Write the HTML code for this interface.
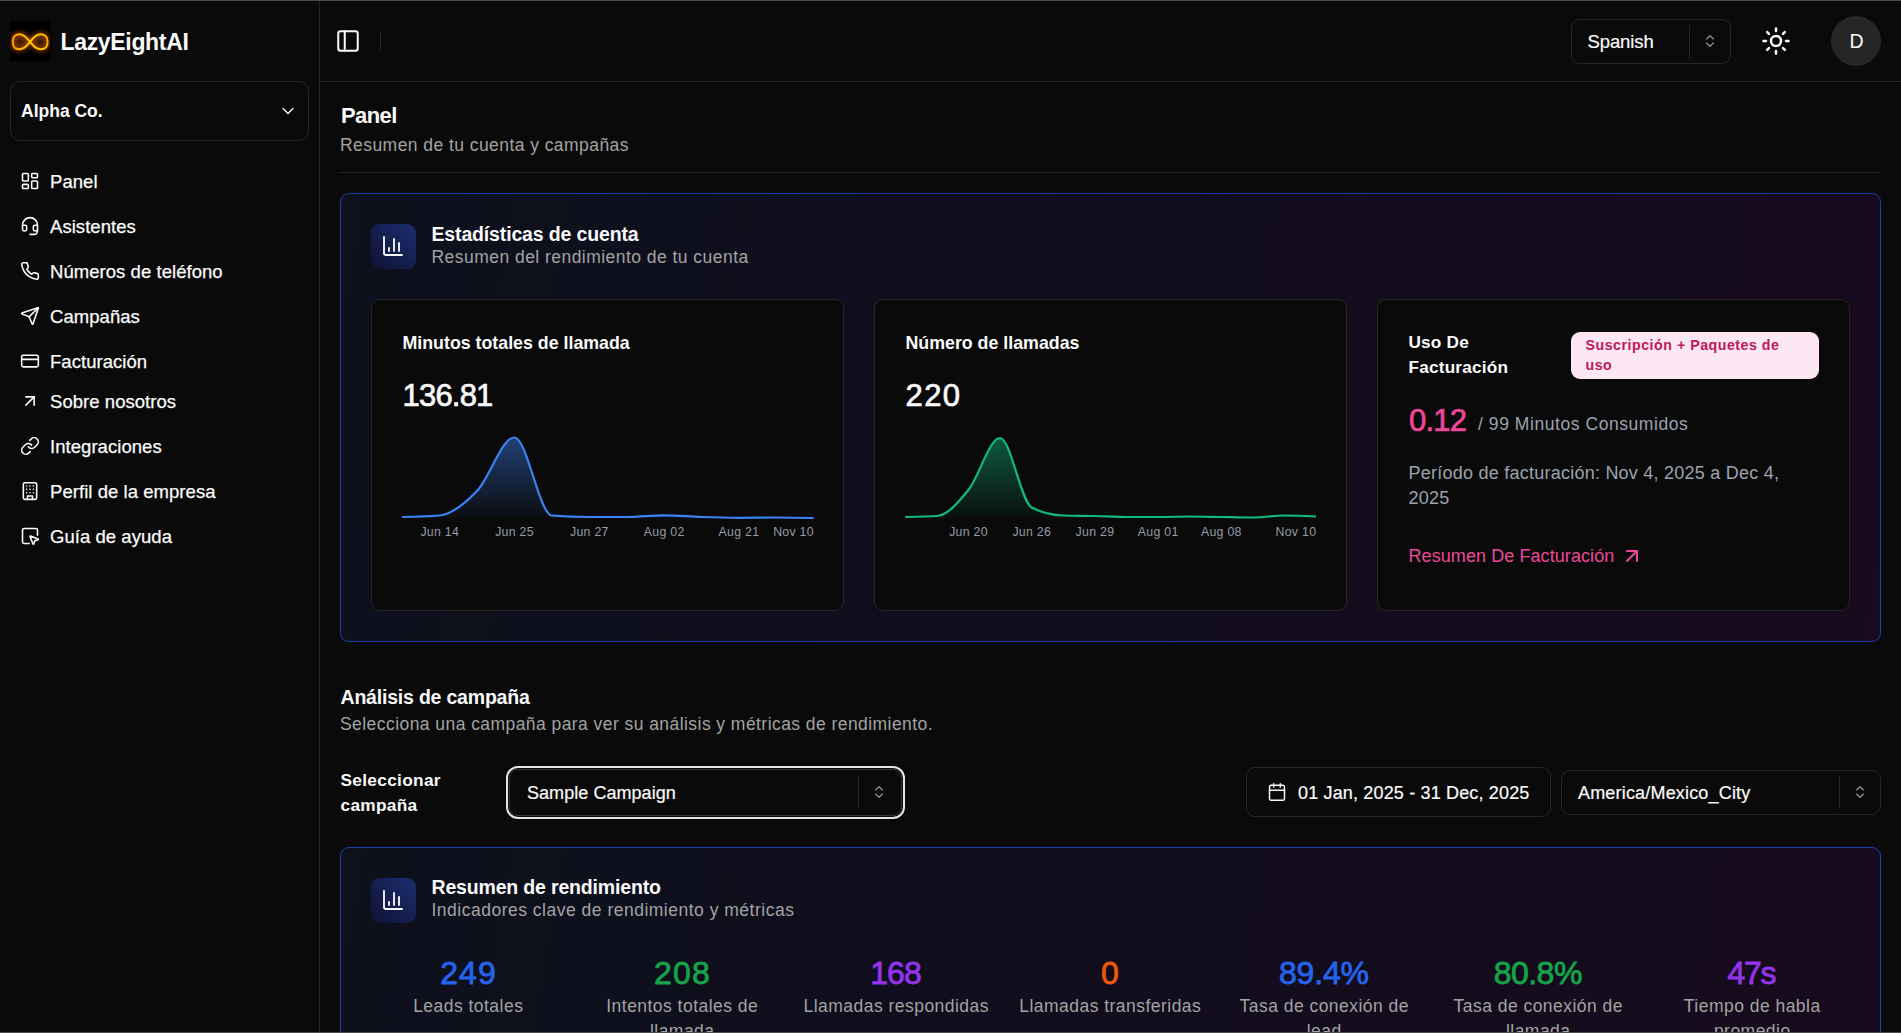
<!DOCTYPE html><html><head><meta charset="utf-8"><style>
html,body{margin:0;padding:0;background:#0a0a0a;width:1901px;height:1033px;overflow:hidden;}
body{position:relative;font-family:"Liberation Sans",sans-serif;}
.t{position:absolute;font-family:"Liberation Sans",sans-serif;}
svg{display:block}
</style></head><body>
<div style="position:absolute;left:319px;top:1px;width:1px;height:1031px;box-sizing:border-box;background:#262626;"></div>
<div style="position:absolute;left:320px;top:81px;width:1581px;height:1px;box-sizing:border-box;background:#262626;"></div>
<svg style="position:absolute;left:10px;top:21px" width="40" height="40" viewBox="0 0 40 40">
<defs><filter id="glow" x="-50%" y="-50%" width="200%" height="200%"><feGaussianBlur stdDeviation="2.6"/></filter>
<filter id="glow2" x="-50%" y="-50%" width="200%" height="200%"><feGaussianBlur stdDeviation="0.6"/></filter>
<linearGradient id="lg" x1="0" y1="0" x2="1" y2="0"><stop offset="0" stop-color="#ff9d00"/><stop offset="0.5" stop-color="#ffcc00"/><stop offset="1" stop-color="#ffb000"/></linearGradient></defs>
<rect width="40" height="40" fill="#000"/>
<path d="M20,20.8 C24,16 26.5,13.3 31,13.3 C35.3,13.3 37.6,16.5 37.6,20.8 C37.6,25.2 35.3,28.3 31,28.3 C26.5,28.3 24,25.6 20,20.8 C16,16 13.5,13.3 9,13.3 C4.7,13.3 2.8,16.5 2.8,20.8 C2.8,25.2 4.7,28.3 9,28.3 C13.5,28.3 16,25.6 20,20.8Z" fill="#3a1a00" stroke="#ff7000" stroke-width="4" opacity="0.6" filter="url(#glow)"/>
<path d="M20,20.8 C24,16 26.5,13.3 31,13.3 C35.3,13.3 37.6,16.5 37.6,20.8 C37.6,25.2 35.3,28.3 31,28.3 C26.5,28.3 24,25.6 20,20.8 C16,16 13.5,13.3 9,13.3 C4.7,13.3 2.8,16.5 2.8,20.8 C2.8,25.2 4.7,28.3 9,28.3 C13.5,28.3 16,25.6 20,20.8Z" fill="none" stroke="url(#lg)" stroke-width="2" filter="url(#glow2)"/>
</svg>
<div class="t" style="left:60.5px;top:30.53px;font-size:23px;line-height:23px;font-weight:700;color:#fafafa;letter-spacing:-0.33px;white-space:nowrap;">LazyEightAI</div>
<div style="position:absolute;left:10px;top:81px;width:299px;height:60px;box-sizing:border-box;border:1px solid #262626;border-radius:10px;"></div>
<div class="t" style="left:21px;top:102.99px;font-size:17.5px;line-height:17.5px;font-weight:700;color:#fafafa;white-space:nowrap;">Alpha Co.</div>
<svg style="position:absolute;left:278px;top:101px;" width="20" height="20" viewBox="0 0 24 24" fill="none" stroke="#fafafa" stroke-width="1.6" stroke-linecap="round" stroke-linejoin="round"><path d="m6 9 6 6 6-6"/></svg>
<svg style="position:absolute;left:20px;top:171px;" width="20" height="20" viewBox="0 0 24 24" fill="none" stroke="#fafafa" stroke-width="1.9" stroke-linecap="round" stroke-linejoin="round"><rect width="7" height="9" x="3" y="3" rx="1"/><rect width="7" height="5" x="14" y="3" rx="1"/><rect width="7" height="9" x="14" y="12" rx="1"/><rect width="7" height="5" x="3" y="16" rx="1"/></svg>
<div class="t" style="left:50px;top:173.04px;font-size:18.5px;line-height:18.5px;font-weight:400;color:#fafafa;letter-spacing:0.05px;white-space:nowrap;-webkit-text-stroke:0.25px #fafafa;">Panel</div>
<svg style="position:absolute;left:20px;top:216px;" width="20" height="20" viewBox="0 0 24 24" fill="none" stroke="#fafafa" stroke-width="1.9" stroke-linecap="round" stroke-linejoin="round"><path d="M3 11h3a2 2 0 0 1 2 2v3a2 2 0 0 1-2 2H5a2 2 0 0 1-2-2v-5Zm0 0a9 9 0 1 1 18 0m0 0v5a2 2 0 0 1-2 2h-1a2 2 0 0 1-2-2v-3a2 2 0 0 1 2-2h3Z"/><path d="M21 16v2a4 4 0 0 1-4 4h-5"/></svg>
<div class="t" style="left:50px;top:218.04px;font-size:18.5px;line-height:18.5px;font-weight:400;color:#fafafa;letter-spacing:0.05px;white-space:nowrap;-webkit-text-stroke:0.25px #fafafa;">Asistentes</div>
<svg style="position:absolute;left:20px;top:261px;" width="20" height="20" viewBox="0 0 24 24" fill="none" stroke="#fafafa" stroke-width="1.9" stroke-linecap="round" stroke-linejoin="round"><path d="M22 16.92v3a2 2 0 0 1-2.18 2 19.79 19.79 0 0 1-8.63-3.07 19.5 19.5 0 0 1-6-6 19.79 19.79 0 0 1-3.07-8.67A2 2 0 0 1 4.11 2h3a2 2 0 0 1 2 1.72 12.84 12.84 0 0 0 .7 2.81 2 2 0 0 1-.45 2.11L8.09 9.910a16 16 0 0 0 6 6l1.27-1.27a2 2 0 0 1 2.11-.45 12.84 12.84 0 0 0 2.81.7A2 2 0 0 1 22 16.92z"/></svg>
<div class="t" style="left:50px;top:263.04px;font-size:18.5px;line-height:18.5px;font-weight:400;color:#fafafa;letter-spacing:0.05px;white-space:nowrap;-webkit-text-stroke:0.25px #fafafa;">Números de teléfono</div>
<svg style="position:absolute;left:20px;top:306px;" width="20" height="20" viewBox="0 0 24 24" fill="none" stroke="#fafafa" stroke-width="1.9" stroke-linecap="round" stroke-linejoin="round"><path d="M14.536 21.686a.5.5 0 0 0 .937-.024l6.5-19a.496.496 0 0 0-.635-.635l-19 6.5a.5.5 0 0 0-.024.937l7.93 3.18a2 2 0 0 1 1.112 1.11z"/><path d="m21.854 2.147-10.94 10.939"/></svg>
<div class="t" style="left:50px;top:308.04px;font-size:18.5px;line-height:18.5px;font-weight:400;color:#fafafa;letter-spacing:0.05px;white-space:nowrap;-webkit-text-stroke:0.25px #fafafa;">Campañas</div>
<svg style="position:absolute;left:20px;top:351px;" width="20" height="20" viewBox="0 0 24 24" fill="none" stroke="#fafafa" stroke-width="1.9" stroke-linecap="round" stroke-linejoin="round"><rect width="20" height="14" x="2" y="5" rx="2"/><line x1="2" x2="22" y1="10" y2="10"/></svg>
<div class="t" style="left:50px;top:353.04px;font-size:18.5px;line-height:18.5px;font-weight:400;color:#fafafa;letter-spacing:0.05px;white-space:nowrap;-webkit-text-stroke:0.25px #fafafa;">Facturación</div>
<svg style="position:absolute;left:20px;top:391px;" width="20" height="20" viewBox="0 0 24 24" fill="none" stroke="#fafafa" stroke-width="1.9" stroke-linecap="round" stroke-linejoin="round"><path d="M7 7h10v10"/><path d="M7 17 17 7"/></svg>
<div class="t" style="left:50px;top:393.04px;font-size:18.5px;line-height:18.5px;font-weight:400;color:#fafafa;letter-spacing:0.05px;white-space:nowrap;-webkit-text-stroke:0.25px #fafafa;">Sobre nosotros</div>
<svg style="position:absolute;left:20px;top:436px;" width="20" height="20" viewBox="0 0 24 24" fill="none" stroke="#fafafa" stroke-width="1.9" stroke-linecap="round" stroke-linejoin="round"><path d="M10 13a5 5 0 0 0 7.54.54l3-3a5 5 0 0 0-7.07-7.07l-1.72 1.71"/><path d="M14 11a5 5 0 0 0-7.54-.54l-3 3a5 5 0 0 0 7.07 7.07l1.71-1.71"/></svg>
<div class="t" style="left:50px;top:438.04px;font-size:18.5px;line-height:18.5px;font-weight:400;color:#fafafa;letter-spacing:0.05px;white-space:nowrap;-webkit-text-stroke:0.25px #fafafa;">Integraciones</div>
<svg style="position:absolute;left:20px;top:481px;" width="20" height="20" viewBox="0 0 24 24" fill="none" stroke="#fafafa" stroke-width="1.9" stroke-linecap="round" stroke-linejoin="round"><rect width="16" height="20" x="4" y="2" rx="2" ry="2"/><path d="M9 22v-4h6v4"/><path d="M8 6h.01"/><path d="M16 6h.01"/><path d="M12 6h.01"/><path d="M12 10h.01"/><path d="M12 14h.01"/><path d="M16 10h.01"/><path d="M16 14h.01"/><path d="M8 10h.01"/><path d="M8 14h.01"/></svg>
<div class="t" style="left:50px;top:483.04px;font-size:18.5px;line-height:18.5px;font-weight:400;color:#fafafa;letter-spacing:0.05px;white-space:nowrap;-webkit-text-stroke:0.25px #fafafa;">Perfil de la empresa</div>
<svg style="position:absolute;left:20px;top:526px;" width="20" height="20" viewBox="0 0 24 24" fill="none" stroke="#fafafa" stroke-width="1.9" stroke-linecap="round" stroke-linejoin="round"><path d="M12.034 12.681a.498.498 0 0 1 .647-.647l9 3.5a.5.5 0 0 1-.033.943l-3.444 1.068a1 1 0 0 0-.66.66l-1.067 3.443a.5.5 0 0 1-.943.033z"/><path d="M21 11V5a2 2 0 0 0-2-2H5a2 2 0 0 0-2 2v14a2 2 0 0 0 2 2h6"/></svg>
<div class="t" style="left:50px;top:528.04px;font-size:18.5px;line-height:18.5px;font-weight:400;color:#fafafa;letter-spacing:0.05px;white-space:nowrap;-webkit-text-stroke:0.25px #fafafa;">Guía de ayuda</div>
<svg style="position:absolute;left:334.5px;top:28px;" width="26" height="26" viewBox="0 0 24 24" fill="none" stroke="#fafafa" stroke-width="1.85" stroke-linecap="round" stroke-linejoin="round"><rect width="18" height="18" x="3" y="3" rx="2"/><path d="M9 3v18"/></svg>
<div style="position:absolute;left:380px;top:31px;width:1px;height:20px;box-sizing:border-box;background:#262626;"></div>
<div style="position:absolute;left:1571px;top:19px;width:160px;height:45px;box-sizing:border-box;border:1px solid #262626;border-radius:9px;"></div>
<div class="t" style="left:1587.5px;top:33.14px;font-size:18.5px;line-height:18.5px;font-weight:400;color:#fafafa;letter-spacing:-0.1px;white-space:nowrap;-webkit-text-stroke:0.2px #fafafa;">Spanish</div>
<div style="position:absolute;left:1689px;top:25px;width:1px;height:33px;box-sizing:border-box;background:#262626;"></div>
<svg style="position:absolute;left:1702px;top:33px;" width="16" height="16" viewBox="0 0 24 24" fill="none" stroke="#a3a3a3" stroke-width="1.6" stroke-linecap="round" stroke-linejoin="round"><path d="m7 15 5 5 5-5"/><path d="m7 9 5-5 5 5"/></svg>
<svg style="position:absolute;left:1761px;top:26px;" width="30" height="30" viewBox="0 0 24 24" fill="none" stroke="#fafafa" stroke-width="2" stroke-linecap="round" stroke-linejoin="round"><circle cx="12" cy="12" r="4"/><path d="M12 2v2"/><path d="M12 20v2"/><path d="m4.93 4.93 1.41 1.41"/><path d="m17.66 17.66 1.41 1.41"/><path d="M2 12h2"/><path d="M20 12h2"/><path d="m6.34 17.66-1.41 1.41"/><path d="m19.07 4.93-1.41 1.41"/></svg>
<div style="position:absolute;left:1831px;top:16px;width:50px;height:50px;box-sizing:border-box;background:#262626;border-radius:50%;"></div>
<div class="t" style="left:1849.5px;top:32.29px;font-size:19.5px;line-height:19.5px;font-weight:400;color:#fafafa;white-space:nowrap;">D</div>
<div class="t" style="left:341px;top:105.08px;font-size:22px;line-height:22px;font-weight:700;color:#fafafa;letter-spacing:-0.6px;white-space:nowrap;">Panel</div>
<div class="t" style="left:340px;top:137.09px;font-size:17.5px;line-height:17.5px;font-weight:400;color:#a3a3a3;letter-spacing:0.44px;white-space:nowrap;">Resumen de tu cuenta y campañas</div>
<div style="position:absolute;left:340px;top:172px;width:1541px;height:1px;box-sizing:border-box;background:#262626;"></div>
<div style="position:absolute;left:340px;top:193px;width:1541px;height:449px;box-sizing:border-box;border:1px solid #1e40af;border-radius:9px;background:linear-gradient(100deg,#0d111c 0%,#110d1d 50%,#170b1d 100%);"></div>
<div style="position:absolute;left:371px;top:224px;width:45px;height:45px;box-sizing:border-box;border-radius:9px;background:linear-gradient(to top right,#0e1233,#1c2e70);"></div>
<svg style="position:absolute;left:380.8px;top:233.8px;" width="24" height="24" viewBox="0 0 24 24" fill="none" stroke="#fafafa" stroke-width="1.85" stroke-linecap="round" stroke-linejoin="round"><path d="M3 3v16a2 2 0 0 0 2 2h16"/><path d="M18 17V9"/><path d="M13 17V5"/><path d="M8 17v-3"/></svg>
<div class="t" style="left:431.5px;top:224.99px;font-size:19.5px;line-height:19.5px;font-weight:700;color:#fafafa;letter-spacing:-0.15px;white-space:nowrap;">Estadísticas de cuenta</div>
<div class="t" style="left:431.5px;top:248.59px;font-size:17.5px;line-height:17.5px;font-weight:400;color:#a3a3a3;letter-spacing:0.46px;white-space:nowrap;">Resumen del rendimiento de tu cuenta</div>
<div style="position:absolute;left:371px;top:299px;width:473px;height:312px;box-sizing:border-box;background:#0a0a0a;border:1px solid #262626;border-radius:9px;"></div>
<div style="position:absolute;left:874px;top:299px;width:473px;height:312px;box-sizing:border-box;background:#0a0a0a;border:1px solid #262626;border-radius:9px;"></div>
<div style="position:absolute;left:1377px;top:299px;width:473px;height:312px;box-sizing:border-box;background:#0a0a0a;border:1px solid #262626;border-radius:9px;"></div>
<div class="t" style="left:402.5px;top:334.63px;font-size:17.8px;line-height:17.8px;font-weight:700;color:#fafafa;white-space:nowrap;">Minutos totales de llamada</div>
<div class="t" style="left:402.5px;top:380.26px;font-size:31px;line-height:31px;font-weight:400;color:#fafafa;letter-spacing:-0.8px;white-space:nowrap;-webkit-text-stroke:0.7px #fafafa;">136.81</div>
<svg style="position:absolute;left:0;top:0;pointer-events:none" width="1901" height="1033" viewBox="0 0 1901 1033">
<defs><linearGradient id="fa" x1="0" y1="0" x2="0" y2="1"><stop offset="0" stop-color="#3b82f6" stop-opacity="0.45"/><stop offset="1" stop-color="#3b82f6" stop-opacity="0.03"/></linearGradient></defs>
<path d="M402.20,517.00C414.67,516.75,427.13,516.50,439.60,515.50C452.07,514.50,464.53,504.00,477.00,491.00C489.47,478.00,501.93,437.50,514.40,437.50C526.87,437.50,539.33,514.50,551.80,515.50C564.27,516.50,576.73,517.00,589.20,517.00C601.67,517.00,614.13,517.00,626.60,517.00C639.07,517.00,651.53,515.30,664.00,515.30C676.47,515.30,688.93,516.58,701.40,517.00C713.87,517.42,726.33,517.80,738.80,517.80C751.27,517.80,763.73,517.50,776.20,517.50C788.67,517.50,801.13,517.75,813.60,518.00L813.60,518L402.20,518Z" fill="url(#fa)" stroke="none" transform="translate(0,0)"/>
<path d="M402.20,517.00C414.67,516.75,427.13,516.50,439.60,515.50C452.07,514.50,464.53,504.00,477.00,491.00C489.47,478.00,501.93,437.50,514.40,437.50C526.87,437.50,539.33,514.50,551.80,515.50C564.27,516.50,576.73,517.00,589.20,517.00C601.67,517.00,614.13,517.00,626.60,517.00C639.07,517.00,651.53,515.30,664.00,515.30C676.47,515.30,688.93,516.58,701.40,517.00C713.87,517.42,726.33,517.80,738.80,517.80C751.27,517.80,763.73,517.50,776.20,517.50C788.67,517.50,801.13,517.75,813.60,518.00" fill="none" stroke="#3b82f6" stroke-width="2.2"/></svg>
<div class="t" style="left:389.75px;width:100px;text-align:center;top:525.59px;font-size:12.3px;line-height:12.3px;letter-spacing:0.3px;color:#959ba8;white-space:nowrap">Jun 14</div>
<div class="t" style="left:464.54999999999995px;width:100px;text-align:center;top:525.59px;font-size:12.3px;line-height:12.3px;letter-spacing:0.3px;color:#959ba8;white-space:nowrap">Jun 25</div>
<div class="t" style="left:539.35px;width:100px;text-align:center;top:525.59px;font-size:12.3px;line-height:12.3px;letter-spacing:0.3px;color:#959ba8;white-space:nowrap">Jun 27</div>
<div class="t" style="left:614.15px;width:100px;text-align:center;top:525.59px;font-size:12.3px;line-height:12.3px;letter-spacing:0.3px;color:#959ba8;white-space:nowrap">Aug 02</div>
<div class="t" style="left:688.9499999999999px;width:100px;text-align:center;top:525.59px;font-size:12.3px;line-height:12.3px;letter-spacing:0.3px;color:#959ba8;white-space:nowrap">Aug 21</div>
<div class="t" style="left:713.9px;width:100px;text-align:right;top:525.59px;font-size:12.3px;line-height:12.3px;letter-spacing:0.3px;color:#959ba8;white-space:nowrap">Nov 10</div>
<div class="t" style="left:905.5px;top:334.63px;font-size:17.8px;line-height:17.8px;font-weight:700;color:#fafafa;white-space:nowrap;">Número de llamadas</div>
<div class="t" style="left:905.5px;top:380.26px;font-size:31px;line-height:31px;font-weight:400;color:#fafafa;letter-spacing:1.4px;white-space:nowrap;-webkit-text-stroke:0.7px #fafafa;">220</div>
<svg style="position:absolute;left:0;top:0;pointer-events:none" width="1901" height="1033" viewBox="0 0 1901 1033">
<defs><linearGradient id="fb" x1="0" y1="0" x2="0" y2="1"><stop offset="0" stop-color="#10b981" stop-opacity="0.45"/><stop offset="1" stop-color="#10b981" stop-opacity="0.03"/></linearGradient></defs>
<path d="M905.20,517.00C915.73,516.83,926.27,516.67,936.80,516.00C947.33,515.33,957.87,503.00,968.40,490.00C978.93,477.00,989.47,438.00,1000.00,438.00C1010.53,438.00,1021.07,502.17,1031.60,507.50C1042.13,512.83,1052.67,515.17,1063.20,515.50C1073.73,515.83,1084.27,515.75,1094.80,516.00C1105.33,516.25,1115.87,517.00,1126.40,517.00C1136.93,517.00,1147.47,517.00,1158.00,517.00C1168.53,517.00,1179.07,516.50,1189.60,516.50C1200.13,516.50,1210.67,516.83,1221.20,517.00C1231.73,517.17,1242.27,517.50,1252.80,517.50C1263.33,517.50,1273.87,515.50,1284.40,515.50C1294.93,515.50,1305.47,516.00,1316.00,516.50L1316.00,518L905.20,518Z" fill="url(#fb)" stroke="none" transform="translate(0,0)"/>
<path d="M905.20,517.00C915.73,516.83,926.27,516.67,936.80,516.00C947.33,515.33,957.87,503.00,968.40,490.00C978.93,477.00,989.47,438.00,1000.00,438.00C1010.53,438.00,1021.07,502.17,1031.60,507.50C1042.13,512.83,1052.67,515.17,1063.20,515.50C1073.73,515.83,1084.27,515.75,1094.80,516.00C1105.33,516.25,1115.87,517.00,1126.40,517.00C1136.93,517.00,1147.47,517.00,1158.00,517.00C1168.53,517.00,1179.07,516.50,1189.60,516.50C1200.13,516.50,1210.67,516.83,1221.20,517.00C1231.73,517.17,1242.27,517.50,1252.80,517.50C1263.33,517.50,1273.87,515.50,1284.40,515.50C1294.93,515.50,1305.47,516.00,1316.00,516.50" fill="none" stroke="#10b981" stroke-width="2.2"/></svg>
<div class="t" style="left:918.55px;width:100px;text-align:center;top:525.59px;font-size:12.3px;line-height:12.3px;letter-spacing:0.3px;color:#959ba8;white-space:nowrap">Jun 20</div>
<div class="t" style="left:981.7499999999999px;width:100px;text-align:center;top:525.59px;font-size:12.3px;line-height:12.3px;letter-spacing:0.3px;color:#959ba8;white-space:nowrap">Jun 26</div>
<div class="t" style="left:1044.95px;width:100px;text-align:center;top:525.59px;font-size:12.3px;line-height:12.3px;letter-spacing:0.3px;color:#959ba8;white-space:nowrap">Jun 29</div>
<div class="t" style="left:1108.15px;width:100px;text-align:center;top:525.59px;font-size:12.3px;line-height:12.3px;letter-spacing:0.3px;color:#959ba8;white-space:nowrap">Aug 01</div>
<div class="t" style="left:1171.3500000000001px;width:100px;text-align:center;top:525.59px;font-size:12.3px;line-height:12.3px;letter-spacing:0.3px;color:#959ba8;white-space:nowrap">Aug 08</div>
<div class="t" style="left:1216.3px;width:100px;text-align:right;top:525.59px;font-size:12.3px;line-height:12.3px;letter-spacing:0.3px;color:#959ba8;white-space:nowrap">Nov 10</div>
<div class="t" style="left:1408.5px;top:334.44px;font-size:17.2px;line-height:17.2px;font-weight:700;color:#fafafa;letter-spacing:0.2px;white-space:nowrap;">Uso De</div>
<div class="t" style="left:1408.5px;top:359.04px;font-size:17.2px;line-height:17.2px;font-weight:700;color:#fafafa;letter-spacing:0.2px;white-space:nowrap;">Facturación</div>
<div style="position:absolute;left:1571px;top:332px;width:248px;height:47px;box-sizing:border-box;background:#fce7f3;border-radius:9px;"></div>
<div class="t" style="left:1585.5px;top:337.98px;font-size:14.2px;line-height:14.2px;font-weight:700;color:#be185d;letter-spacing:0.52px;white-space:nowrap;">Suscripción + Paquetes de</div>
<div class="t" style="left:1585.5px;top:357.58px;font-size:14.2px;line-height:14.2px;font-weight:700;color:#be185d;letter-spacing:0.52px;white-space:nowrap;">uso</div>
<div class="t" style="left:1409px;top:404.56px;font-size:31px;line-height:31px;font-weight:400;color:#ec4899;letter-spacing:-0.8px;white-space:nowrap;-webkit-text-stroke:0.7px #ec4899;">0.12</div>
<div class="t" style="left:1478px;top:415.69px;font-size:17.5px;line-height:17.5px;font-weight:400;color:#9ca3af;letter-spacing:0.56px;white-space:nowrap;">/ 99 Minutos Consumidos</div>
<div class="t" style="left:1408.5px;top:463.76px;font-size:18px;line-height:18px;font-weight:400;color:#9ca3af;letter-spacing:0.24px;white-space:nowrap;">Período de facturación: Nov 4, 2025 a Dec 4,</div>
<div class="t" style="left:1408.5px;top:488.56px;font-size:18px;line-height:18px;font-weight:400;color:#9ca3af;letter-spacing:0.24px;white-space:nowrap;">2025</div>
<div class="t" style="left:1408.5px;top:546.76px;font-size:18px;line-height:18px;font-weight:400;color:#ec4899;letter-spacing:0.08px;white-space:nowrap;">Resumen De Facturación</div>
<svg style="position:absolute;left:1619.5px;top:543.75px;" width="24" height="24" viewBox="0 0 24 24" fill="none" stroke="#ec4899" stroke-width="2" stroke-linecap="round" stroke-linejoin="round"><path d="M7 7h10v10"/><path d="M7 17 17 7"/></svg>
<div class="t" style="left:340.5px;top:688.39px;font-size:19.5px;line-height:19.5px;font-weight:700;color:#fafafa;letter-spacing:-0.2px;white-space:nowrap;">Análisis de campaña</div>
<div class="t" style="left:340px;top:715.79px;font-size:17.5px;line-height:17.5px;font-weight:400;color:#a3a3a3;letter-spacing:0.44px;white-space:nowrap;">Selecciona una campaña para ver su análisis y métricas de rendimiento.</div>
<div class="t" style="left:340.5px;top:771.66px;font-size:17.3px;line-height:17.3px;font-weight:700;color:#fafafa;letter-spacing:0.3px;white-space:nowrap;">Seleccionar</div>
<div class="t" style="left:340.5px;top:796.76px;font-size:17.3px;line-height:17.3px;font-weight:700;color:#fafafa;letter-spacing:0.3px;white-space:nowrap;">campaña</div>
<div style="position:absolute;left:506px;top:766px;width:399px;height:53px;box-sizing:border-box;border:2px solid #e5e5e5;border-radius:12px;"></div>
<div style="position:absolute;left:509px;top:769px;width:393px;height:47px;box-sizing:border-box;border:1px solid #363636;border-radius:9px;"></div>
<div class="t" style="left:527px;top:783.96px;font-size:18px;line-height:18px;font-weight:400;color:#fafafa;letter-spacing:0.05px;white-space:nowrap;-webkit-text-stroke:0.2px #fafafa;">Sample Campaign</div>
<div style="position:absolute;left:858px;top:776px;width:1px;height:33px;box-sizing:border-box;background:#262626;"></div>
<svg style="position:absolute;left:871px;top:784px;" width="16" height="16" viewBox="0 0 24 24" fill="none" stroke="#a3a3a3" stroke-width="1.6" stroke-linecap="round" stroke-linejoin="round"><path d="m7 15 5 5 5-5"/><path d="m7 9 5-5 5 5"/></svg>
<div style="position:absolute;left:1246px;top:767px;width:305px;height:50px;box-sizing:border-box;border:1px solid #262626;border-radius:9px;"></div>
<svg style="position:absolute;left:1267px;top:782px;" width="20" height="20" viewBox="0 0 24 24" fill="none" stroke="#fafafa" stroke-width="1.75" stroke-linecap="round" stroke-linejoin="round"><path d="M8 2v4"/><path d="M16 2v4"/><rect width="18" height="18" x="3" y="4" rx="2"/><path d="M3 10h18"/></svg>
<div class="t" style="left:1298px;top:783.96px;font-size:18px;line-height:18px;font-weight:400;color:#fafafa;letter-spacing:0.16px;white-space:nowrap;-webkit-text-stroke:0.2px #fafafa;">01 Jan, 2025 - 31 Dec, 2025</div>
<div style="position:absolute;left:1561px;top:770px;width:320px;height:45px;box-sizing:border-box;border:1px solid #262626;border-radius:9px;"></div>
<div class="t" style="left:1578px;top:783.56px;font-size:18px;line-height:18px;font-weight:400;color:#fafafa;letter-spacing:0.18px;white-space:nowrap;-webkit-text-stroke:0.2px #fafafa;">America/Mexico_City</div>
<div style="position:absolute;left:1839px;top:776px;width:1px;height:33px;box-sizing:border-box;background:#262626;"></div>
<svg style="position:absolute;left:1852px;top:784px;" width="16" height="16" viewBox="0 0 24 24" fill="none" stroke="#a3a3a3" stroke-width="1.6" stroke-linecap="round" stroke-linejoin="round"><path d="m7 15 5 5 5-5"/><path d="m7 9 5-5 5 5"/></svg>
<div style="position:absolute;left:340px;top:847px;width:1541px;height:260px;box-sizing:border-box;border:1px solid #1e40af;border-radius:9px;background:linear-gradient(100deg,#0d111c 0%,#110d1d 50%,#170b1d 100%);"></div>
<div style="position:absolute;left:371px;top:878px;width:45px;height:45px;box-sizing:border-box;border-radius:9px;background:linear-gradient(to top right,#0e1233,#1c2e70);"></div>
<svg style="position:absolute;left:380.8px;top:887.8px;" width="24" height="24" viewBox="0 0 24 24" fill="none" stroke="#fafafa" stroke-width="1.85" stroke-linecap="round" stroke-linejoin="round"><path d="M3 3v16a2 2 0 0 0 2 2h16"/><path d="M18 17V9"/><path d="M13 17V5"/><path d="M8 17v-3"/></svg>
<div class="t" style="left:431.5px;top:877.79px;font-size:19.5px;line-height:19.5px;font-weight:700;color:#fafafa;letter-spacing:-0.17px;white-space:nowrap;">Resumen de rendimiento</div>
<div class="t" style="left:431.5px;top:901.69px;font-size:17.5px;line-height:17.5px;font-weight:400;color:#a3a3a3;letter-spacing:0.5px;white-space:nowrap;">Indicadores clave de rendimiento y métricas</div>
<div class="t" style="left:361.5px;top:956.91px;font-size:32px;line-height:32px;font-weight:400;color:#2563eb;letter-spacing:1.0px;width:214px;text-align:center;-webkit-text-stroke:0.8px #2563eb;">249</div>
<div class="t" style="left:368.25px;top:993.74px;font-size:17.5px;line-height:25px;font-weight:400;color:#a3a3a3;letter-spacing:0.47px;width:200px;text-align:center;">Leads totales</div>
<div class="t" style="left:575.6px;top:956.91px;font-size:32px;line-height:32px;font-weight:400;color:#16a34a;letter-spacing:1.2px;width:214px;text-align:center;-webkit-text-stroke:0.8px #16a34a;">208</div>
<div class="t" style="left:582.25px;top:993.74px;font-size:17.5px;line-height:25px;font-weight:400;color:#a3a3a3;letter-spacing:0.47px;width:200px;text-align:center;">Intentos totales de llamada</div>
<div class="t" style="left:788.5px;top:956.91px;font-size:32px;line-height:32px;font-weight:400;color:#9333ea;letter-spacing:-1.0px;width:214px;text-align:center;-webkit-text-stroke:0.8px #9333ea;">168</div>
<div class="t" style="left:796.25px;top:993.74px;font-size:17.5px;line-height:25px;font-weight:400;color:#a3a3a3;letter-spacing:0.47px;width:200px;text-align:center;">Llamadas respondidas</div>
<div class="t" style="left:1003.0px;top:956.91px;font-size:32px;line-height:32px;font-weight:400;color:#ea580c;width:214px;text-align:center;-webkit-text-stroke:0.8px #ea580c;">0</div>
<div class="t" style="left:1010.25px;top:993.74px;font-size:17.5px;line-height:25px;font-weight:400;color:#a3a3a3;letter-spacing:0.47px;width:200px;text-align:center;">Llamadas transferidas</div>
<div class="t" style="left:1216.9px;top:956.91px;font-size:32px;line-height:32px;font-weight:400;color:#2563eb;letter-spacing:-0.2px;width:214px;text-align:center;-webkit-text-stroke:0.8px #2563eb;">89.4%</div>
<div class="t" style="left:1224.25px;top:993.74px;font-size:17.5px;line-height:25px;font-weight:400;color:#a3a3a3;letter-spacing:0.47px;width:200px;text-align:center;">Tasa de conexión de lead</div>
<div class="t" style="left:1430.75px;top:956.91px;font-size:32px;line-height:32px;font-weight:400;color:#16a34a;letter-spacing:-0.5px;width:214px;text-align:center;-webkit-text-stroke:0.8px #16a34a;">80.8%</div>
<div class="t" style="left:1438.25px;top:993.74px;font-size:17.5px;line-height:25px;font-weight:400;color:#a3a3a3;letter-spacing:0.47px;width:200px;text-align:center;">Tasa de conexión de llamada</div>
<div class="t" style="left:1644.35px;top:956.91px;font-size:32px;line-height:32px;font-weight:400;color:#9333ea;letter-spacing:-1.3px;width:214px;text-align:center;-webkit-text-stroke:0.8px #9333ea;">47s</div>
<div class="t" style="left:1652.25px;top:993.74px;font-size:17.5px;line-height:25px;font-weight:400;color:#a3a3a3;letter-spacing:0.47px;width:200px;text-align:center;">Tiempo de habla promedio</div>
<div style="position:absolute;left:0px;top:0px;width:1901px;height:1px;box-sizing:border-box;background:#4a4a55;z-index:10;"></div>
<div style="position:absolute;left:0px;top:1032px;width:1901px;height:1px;box-sizing:border-box;background:#4b4d48;z-index:10;"></div>
</body></html>
